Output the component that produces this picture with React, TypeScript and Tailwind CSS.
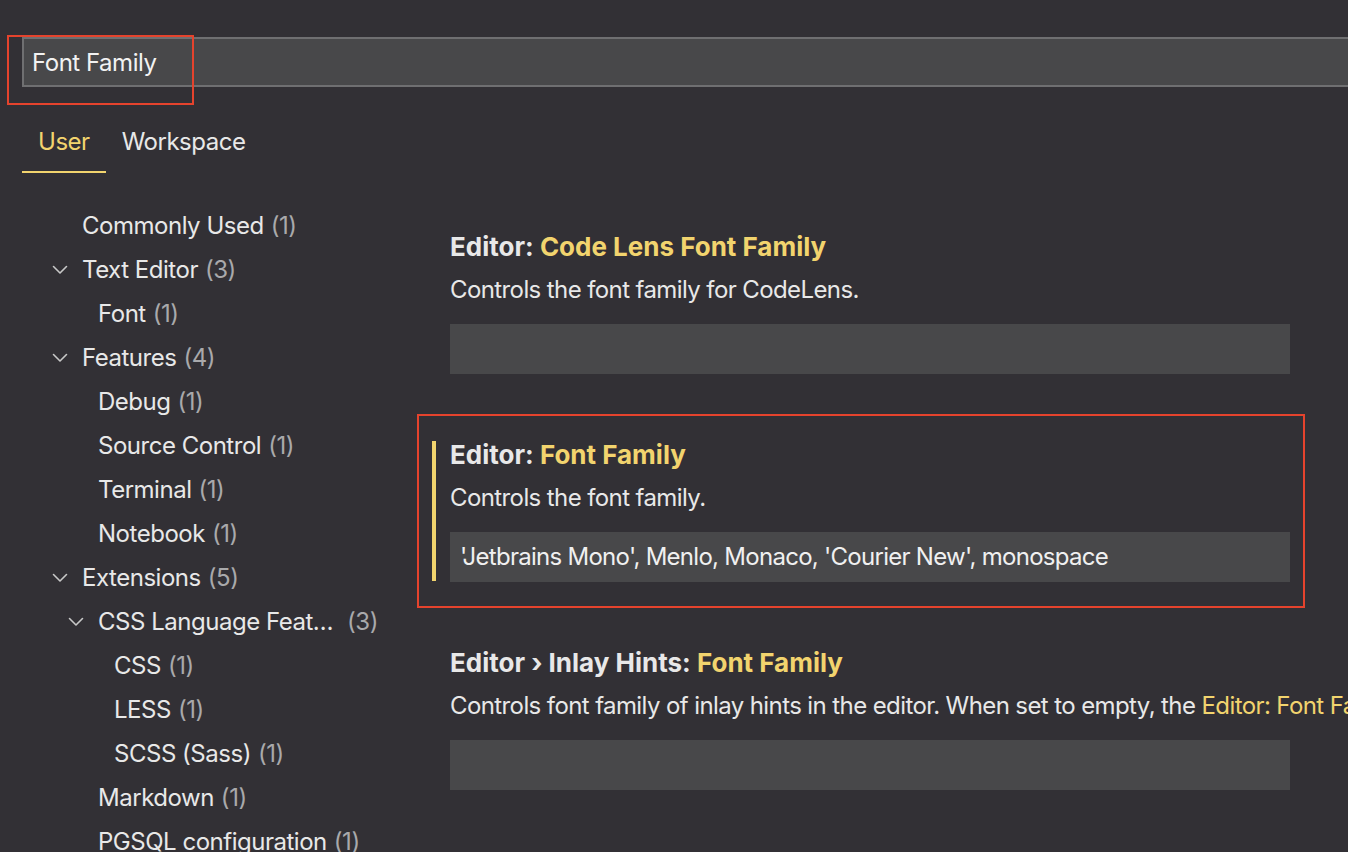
import React from 'react';

type TreeItem = { label: string; count: number; level: number; open?: boolean; truncated?: boolean };

const tree: TreeItem[] = [
  { label: 'Commonly Used', count: 1, level: 1 },
  { label: 'Text Editor', count: 3, level: 1, open: true },
  { label: 'Font', count: 1, level: 2 },
  { label: 'Features', count: 4, level: 1, open: true },
  { label: 'Debug', count: 1, level: 2 },
  { label: 'Source Control', count: 1, level: 2 },
  { label: 'Terminal', count: 1, level: 2 },
  { label: 'Notebook', count: 1, level: 2 },
  { label: 'Extensions', count: 5, level: 1, open: true },
  { label: 'CSS Language Feat…', count: 3, level: 2, open: true, truncated: true },
  { label: 'CSS', count: 1, level: 3 },
  { label: 'LESS', count: 1, level: 3 },
  { label: 'SCSS (Sass)', count: 1, level: 3 },
  { label: 'Markdown', count: 1, level: 2 },
  { label: 'PGSQL configuration', count: 1, level: 2 },
];

const Chevron = () => (
  <svg width="16" height="10" viewBox="0 0 16 10" fill="none">
    <polyline points="1.5,1.5 8,8 14.5,1.5" stroke="#c8c8c8" strokeWidth="1.6" strokeLinecap="round" strokeLinejoin="round" />
  </svg>
);

const indent: Record<number, string> = { 1: 'pl-[52px]', 2: 'pl-[68px]', 3: 'pl-[84px]' };

const Setting: React.FC<{
  prefix: string;
  name: string;
  desc: React.ReactNode;
  value?: string;
  modified?: boolean;
  highlighted?: boolean;
}> = ({ prefix, name, desc, value, modified, highlighted }) => (
  <div className="relative w-[840px]">
    {highlighted && (
      <div className="absolute left-[-33px] top-[-18px] w-[888px] h-[194px] border-2 border-[#e5432d] pointer-events-none" />
    )}
    {modified && <div className="absolute left-[-18px] top-[9px] bottom-[1px] w-[4px] bg-[#f2d46e]" />}
    <div className="h-[44px] flex items-center whitespace-nowrap text-[26px] font-bold">
      <span className="text-[#e8e8e8] whitespace-pre">{prefix}</span>
      <span className="text-[#f2d46e]">{name}</span>
    </div>
    <div className="h-[44px] flex items-center whitespace-pre text-[24px] tracking-[-0.025em] text-[#e8e8e8]">{desc}</div>
    <div className="mt-[12px] h-[50px] bg-[#48484a] flex items-center px-[10px] text-[24px] tracking-[-0.03em] text-[#f0f0f0] whitespace-nowrap">
      {value}
    </div>
  </div>
);

export default function App() {
  return (
    <div className="relative w-full h-[852px] overflow-hidden bg-[#323035] text-[#e8e8e8] font-['Inter','Noto_Sans',sans-serif]">
      <div className="pt-[37px] pl-[22px]">
        <div className="w-[1340px] h-[50px] bg-[#48484a] border-2 border-[#6f6f71] flex items-center pl-[8px] pt-[2px] text-[24px] tracking-[-0.02em] text-[#f2f2f2]">
          Font Family
        </div>
      </div>
      <div className="absolute left-[7px] top-[35px] w-[187px] h-[70px] border-2 border-[#e5432d] pointer-events-none" />

      <div className="mt-[26px] pl-[22px] flex text-[24px] tracking-[-0.02em]">
        <div className="h-[60px] px-4 flex items-center border-b-2 border-[#f2d46e] text-[#f2d46e]">User</div>
        <div className="h-[60px] px-4 flex items-center border-b-2 border-transparent text-[#e8e8e8]">Workspace</div>
      </div>

      <div className="flex">
        <div className="w-[450px] shrink-0 pt-[31px] text-[24px] tracking-[-0.02em]">
          {tree.map((t, i) => (
            <div key={i} className={`h-[44px] flex items-center whitespace-nowrap ${indent[t.level]}`}>
              <div className="w-[30px] flex items-center">{t.open && <Chevron />}</div>
              <span className="text-[#e8e8e8]">{t.label}</span>
              <span className={`text-[#a9a9ab] ${t.truncated ? 'ml-[14px]' : 'ml-[7px]'}`}>({t.count})</span>
            </div>
          ))}
        </div>

        <div className="flex-1 min-w-0 pt-[51px] flex flex-col gap-[58px]">
          <Setting prefix="Editor: " name="Code Lens Font Family" desc="Controls the font family for CodeLens." />
          <Setting
            prefix="Editor: "
            name="Font Family"
            desc="Controls the font family."
            value="'Jetbrains Mono', Menlo, Monaco, 'Courier New', monospace"
            modified
            highlighted
          />
          <Setting
            prefix="Editor › Inlay Hints: "
            name="Font Family"
            desc={
              <>
                {'Controls font family of inlay hints in the editor. When set to empty, the '}
                <span className="text-[#f2d46e]">Editor: Font Family</span>
                {' is used.'}
              </>
            }
          />
        </div>
      </div>
    </div>
  );
}
